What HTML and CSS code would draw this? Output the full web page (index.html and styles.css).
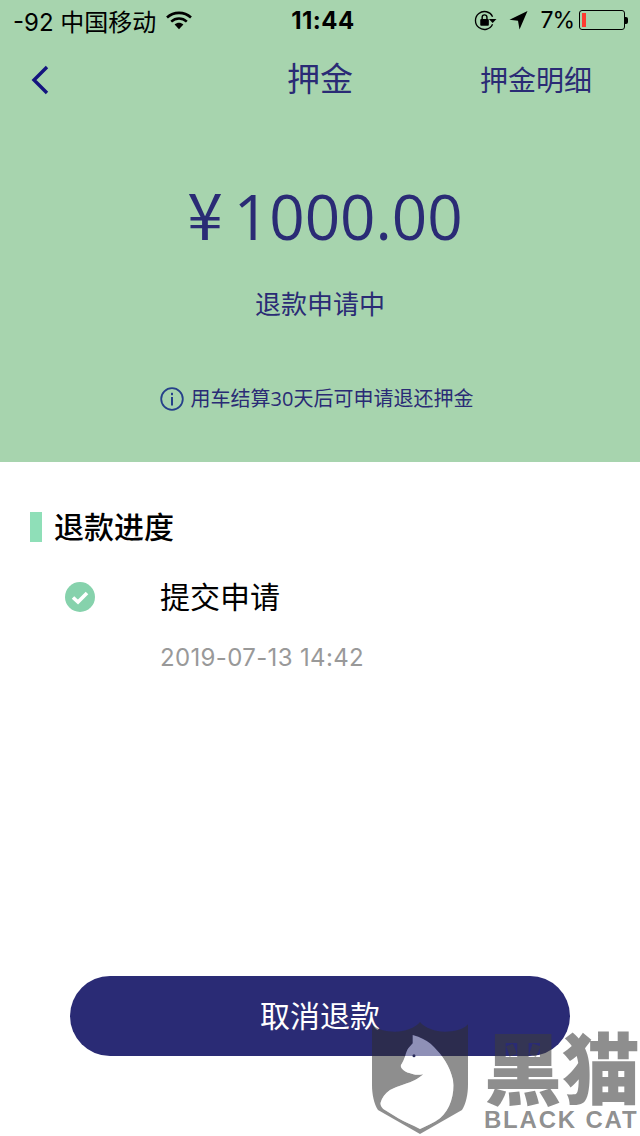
FILE: index.html
```html
<!DOCTYPE HTML>
<html>
<head>
    <meta http-equiv="Content-Type" content="text/html;charset=UTF-8">
    <title>押金</title>
    <link rel="stylesheet" href="styles.css">
</head>
<body>
<div class="main">
    <div class="top">
        <div class="status">
            <div class="status-left">
                <span>-92 中国移动</span>
                <svg class="wifi" width="26" height="20" viewBox="0 0 26 20">
                    <path d="M1 7.5C7.8 1.3 18.2 1.3 25 7.5" fill="none" stroke="#000" stroke-width="2.6"/>
                    <path d="M5.2 11.6C9.8 7.5 16.2 7.5 20.8 11.6" fill="none" stroke="#000" stroke-width="2.6"/>
                    <path d="M8.6 14.6C11.4 12.2 14.6 12.2 17.4 14.6L13 19.2Z" fill="#000"/>
                </svg>
            </div>
            <div class="status-time">11:44</div>
            <div class="status-right">
                <svg width="23" height="21" viewBox="0 0 24 22">
                    <path d="M19.4 7A9.4 9.4 0 1 0 19.4 15" fill="none" stroke="#000" stroke-width="1.4"/>
                    <path d="M15.5 9.5h8l-4 4z" fill="#000"/>
                    <rect x="6.5" y="9.5" width="9" height="7" rx="1" fill="#000"/>
                    <path d="M8.5 9.5V7.6a2.5 2.5 0 0 1 5 0v1.900" fill="none" stroke="#000" stroke-width="1.500"/>
                </svg>
                <svg class="arrow" width="19" height="20" viewBox="0 0 19 20">
                    <path d="M18.500 1L.5 9.800 9 10.800 10.500 19.500Z" fill="#000"/>
                </svg>
                <span class="pct">7%</span>
                <div class="battery"><div class="battery-level"></div></div>
                <div class="battery-tip"></div>
            </div>
        </div>
        <div class="nav">
            <div class="nav-side">
                <svg class="back" width="20" height="30" viewBox="0 0 20 30">
                    <path d="M17 2L4 15L17 28" fill="none" stroke="#14147f" stroke-width="3.400"/>
                </svg>
            </div>
            <div class="title">押金</div>
            <div class="detail">押金明细</div>
        </div>
        <div class="amount"><span class="yen">¥</span>1000.00</div>
        <div class="state">退款申请中</div>
        <div class="tip">
            <svg width="24" height="24" viewBox="0 0 24 24">
                <circle cx="12" cy="12" r="10.800" fill="none" stroke="#25408a" stroke-width="1.800"/>
                <rect x="11" y="10" width="2" height="8.500" fill="#25408a"/>
                <rect x="11" y="5.800" width="2" height="2.400" fill="#25408a"/>
            </svg>
            <span>用车结算30天后可申请退还押金</span>
        </div>
    </div>
    <div class="progress">
        <div class="section-title">退款进度</div>
        <div class="step">
            <svg class="step-icon" width="30" height="30" viewBox="0 0 30 30">
                <circle cx="15" cy="15" r="15" fill="#86d2ac"/>
                <path d="M8 15.500L13 20L22 11" fill="none" stroke="#fff" stroke-width="3.600"/>
            </svg>
            <div class="step-name">提交申请</div>
        </div>
        <div class="step-date">2019-07-13 14:42</div>
    </div>
    <div class="cancel">取消退款</div>

    <div class="mark">
        <svg class="mark-shield" width="98" height="114" viewBox="0 0 98 114">
            <path fill-rule="evenodd" fill="rgba(46,46,46,.54)" d="M0 2.300C5 8 14 9.700 23 9.700C33 9.700 43 6 48 0C53 6 63 9.700 73 9.700C82 9.700 91 8 96 2.300V63C96 72 94 82 90 88L48 112L6 88C2 82 0 72 0 63ZM40.700 13L46.300 14.700C52 17 58 20 62 25C70 33 78 44 81 58C83 72 78 88 68 96.300C62 101 54 104 48 107C40 103 33 100 26.300 96.300L11.300 87C9 85 8 82 8.700 80.300C10 76 13 71.300 18 68C26 63.700 38 61 43 58C46 56.500 49 54 51.300 52.300C47 53 44 53 41.300 52.300C37 51 33 50 31.300 48C29 46 28.500 44 29 43C31 40 32 37 33 34.700C34 31 35 28 36.300 26.300L40.700 21.300Z"/>
            <path fill="rgba(255,255,255,.48)" d="M40.700 13L46.300 14.700C52 17 58 20 62 25C70 33 78 44 81 58C83 72 78 88 68 96.300C62 101 54 104 48 107C40 103 33 100 26.300 96.300L11.300 87C9 85 8 82 8.700 80.300C10 76 13 71.300 18 68C26 63.700 38 61 43 58C46 56.500 49 54 51.300 52.300C47 53 44 53 41.300 52.300C37 51 33 50 31.300 48C29 46 28.500 44 29 43C31 40 32 37 33 34.700C34 31 35 28 36.300 26.300L40.700 21.300Z"/>
            <circle cx="42" cy="33.700" r="1.500" fill="#2a2b5a"/>
        </svg>
        <div class="mark-text">
            <div class="mark-cn">黑猫</div>
            <div class="mark-en">BLACK CAT</div>
        </div>
    </div>
</div>
</body>
</html>
```

FILE: styles.css
```css
* {
    margin: 0;
    padding: 0;
    box-sizing: border-box;
}

body {
    font-family: "Open Sans", "Noto Sans CJK SC", sans-serif;
    background: #fff;
}

.main {
    width: 640px;
    height: 1136px;
    display: flex;
    flex-direction: column;
    position: relative;
    overflow: hidden;
}

.top {
    height: 462px;
    background: #a7d4ae;
    color: #2a2b75;
    display: flex;
    flex-direction: column;
    align-items: center;
}

.status {
    width: 100%;
    height: 40px;
    padding: 0 12px 0 13px;
    display: flex;
    align-items: center;
    justify-content: space-between;
    color: #000;
    font-family: Inter, "Noto Sans CJK SC", sans-serif;
    font-size: 24px;
}

.status-left,
.status-right {
    width: 230px;
    display: flex;
    align-items: center;
}

.status-left .wifi {
    margin-left: 10px;
}

.status-right {
    justify-content: flex-end;
}

.status-time {
    margin-left: 5px;
    font-weight: 700;
    font-size: 24px;
    letter-spacing: .5px;
}

.arrow {
    margin-left: 12px;
}

.pct {
    margin-left: 12px;
    font-size: 23px;
    letter-spacing: -1px;
}

.battery {
    width: 46px;
    height: 20px;
    margin-left: 5px;
    border: 1px solid #000;
    border-radius: 3px;
    padding: 2px;
}

.battery-level {
    width: 4px;
    height: 14px;
    background: #ff3b30;
}

.battery-tip {
    width: 3px;
    height: 7px;
    background: #000;
    border-radius: 0 2px 2px 0;
}

.nav {
    width: 100%;
    height: 78px;
    padding: 0 48px 0 30px;
    display: grid;
    grid-template-columns: 1fr auto 1fr;
    align-items: center;
}

.nav-side {
    display: flex;
    padding-top: 2px;
}

.title {
    font-size: 33px;
    margin: -4px -18px 0 0;
}

.detail {
    font-size: 28px;
    text-align: right;
}

.amount {
    margin: 52px 0 0 10px;
    font-size: 62px;
    line-height: 84px;
}

.yen {
    font-family: "Noto Sans CJK SC", sans-serif;
    font-size: 64px;
    margin-right: 11px;
}

.state {
    margin-top: 27px;
    font-size: 26px;
    line-height: 38px;
}

.tip {
    margin: 61px 7px 0 0;
    display: flex;
    align-items: center;
    gap: 7px;
    font-size: 20px;
    line-height: 30px;
}

.progress {
    padding: 50px 30px 0;
}

.section-title {
    border-left: 12px solid #8fdfb8;
    padding-left: 12px;
    height: 30px;
    line-height: 30px;
    font-size: 30px;
    font-weight: 500;
    color: #000;
}

.step {
    margin-top: 40px;
    display: flex;
    align-items: center;
    padding-left: 35px;
}

.step-name {
    margin-left: 65px;
    font-size: 30px;
    line-height: 30px;
    color: #000;
}

.step-date {
    margin-top: 31px;
    padding-left: 130px;
    font-size: 24px;
    line-height: 30px;
    letter-spacing: .35px;
    color: #999;
    font-family: Inter, sans-serif;
}

.cancel {
    margin: auto 70px 80px;
    height: 80px;
    border-radius: 40px;
    background: #2a2b75;
    color: #fff;
    font-size: 30px;
    line-height: 80px;
    text-align: center;
}

/* 水印 */
.mark {
    position: absolute;
    left: 372px;
    top: 1022px;
    width: 268px;
    display: flex;
}

.mark-text {
    margin-left: 14px;
    color: rgba(60, 60, 60, .58);
    white-space: nowrap;
}

.mark-cn {
    font-family: "Noto Sans CJK SC", sans-serif;
    font-weight: 900;
    font-size: 78px;
    line-height: 86px;
}

.mark-en {
    font-family: "Liberation Sans", sans-serif;
    font-weight: 700;
    font-size: 24px;
    line-height: 24px;
    letter-spacing: 1.800px;
}
```
